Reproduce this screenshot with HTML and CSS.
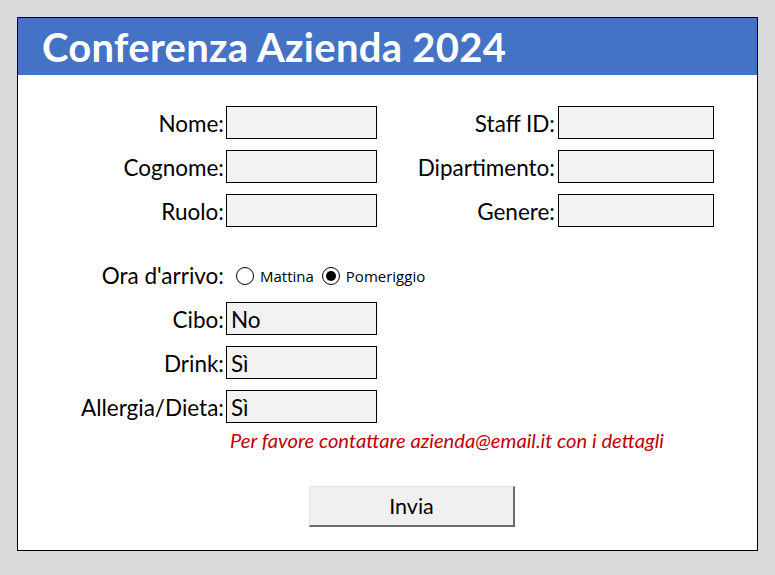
FILE: index.html
```html
<!DOCTYPE html>
<html lang="it">
<head>
<meta charset="utf-8">
<title>Conferenza Azienda 2024</title>
<link rel="stylesheet" href="styles.css">
</head>
<body>
<div class="panel">
  <div class="header"><h1 class="title">Conferenza Azienda 2024</h1></div>
  <div class="content">
    <div class="grid-top">
      <span class="label">Nome:</span><div class="field"></div>
      <span class="label label-r">Staff ID:</span><div class="field"></div>
      <span class="label">Cognome:</span><div class="field"></div>
      <span class="label label-r">Dipartimento:</span><div class="field"></div>
      <span class="label">Ruolo:</span><div class="field"></div>
      <span class="label label-r">Genere:</span><div class="field"></div>
    </div>
    <div class="grid-bottom">
      <span class="label">Ora d'arrivo:</span>
      <div class="radios">
        <span class="radio"><span class="circle"></span>Mattina</span>
        <span class="radio"><span class="circle checked"></span>Pomeriggio</span>
      </div>
      <span class="label">Cibo:</span><div class="field">No</div>
      <span class="label">Drink:</span><div class="field">Sì</div>
      <span class="label">Allergia/Dieta:</span><div class="field">Sì</div>
    </div>
    <p class="note">Per favore contattare azienda@email.it con i dettagli</p>
    <div class="actions"><button class="btn" type="button">Invia</button></div>
  </div>
</div>
</body>
</html>
```
FILE: styles.css
```css
html, body {
  margin: 0;
  padding: 0;
  background: #d9d9d9;
}
body {
  font-family: Lato, "Liberation Sans", sans-serif;
  color: #000;
}
.panel {
  margin: 17px 0 0 17px;
  width: 741px;
  height: 534px;
  box-sizing: border-box;
  border: 1px solid #000;
  background: #fff;
}
.header {
  height: 57px;
  background: #4472c4;
  display: flex;
  align-items: center;
}
.title {
  margin: 0 0 0 24px;
  color: #fff;
  font-size: 40px;
  font-weight: 700;
  line-height: 1;
  letter-spacing: 0.3px;
}
.content {
  padding-top: 31px;
}
.grid-top {
  display: grid;
  grid-template-columns: 208px 151px 181px 156px;
  grid-template-rows: repeat(3, 33px);
  row-gap: 11px;
}
.grid-bottom {
  margin-top: 32px;
  display: grid;
  grid-template-columns: 208px 1fr;
  grid-template-rows: 32px repeat(3, 33px);
  row-gap: 11px;
}
.grid-bottom .field {
  width: 151px;
}
.label {
  font-size: 22.5px;
  text-align: right;
  padding-right: 2px;
  display: flex;
  align-items: center;
  justify-content: flex-end;
  padding-top: 1px;
  white-space: nowrap;
}
.label-r {
  padding-right: 3px;
}
.field {
  box-sizing: border-box;
  border: 1px solid #000;
  background: #f2f2f2;
  font-size: 22.5px;
  padding-left: 4px;
  display: flex;
  align-items: center;
  padding-top: 1px;
}
.radios {
  display: flex;
  align-items: center;
  gap: 8px;
  padding-left: 10px;
  padding-top: 1px;
  font-family: "Open Sans", sans-serif;
  font-size: 15px;
}
.radio {
  display: inline-flex;
  align-items: center;
  gap: 6px;
  white-space: nowrap;
}
.circle {
  width: 18px;
  height: 18px;
  box-sizing: border-box;
  border: 1px solid #000;
  border-radius: 50%;
  position: relative;
  background: #fff;
}
.circle.checked::after {
  content: "";
  position: absolute;
  left: 3px;
  top: 3px;
  width: 10px;
  height: 10px;
  border-radius: 50%;
  background: #000;
}
.note {
  margin: 5px 0 0 212px;
  color: #c00000;
  font-style: italic;
  font-size: 20.2px;
  line-height: 24px;
  white-space: nowrap;
}
.actions {
  margin-top: 34px;
  padding-left: 291px;
}
.btn {
  width: 206px;
  height: 41px;
  box-sizing: border-box;
  background: #f0f0f0;
  border-top: 1px solid #e3e3e3;
  border-left: 1px solid #e3e3e3;
  border-right: 2px solid #6a6a6a;
  border-bottom: 2px solid #6a6a6a;
  font-family: Lato, sans-serif;
  font-size: 21.5px;
  color: #000;
  padding: 0;
}
```
